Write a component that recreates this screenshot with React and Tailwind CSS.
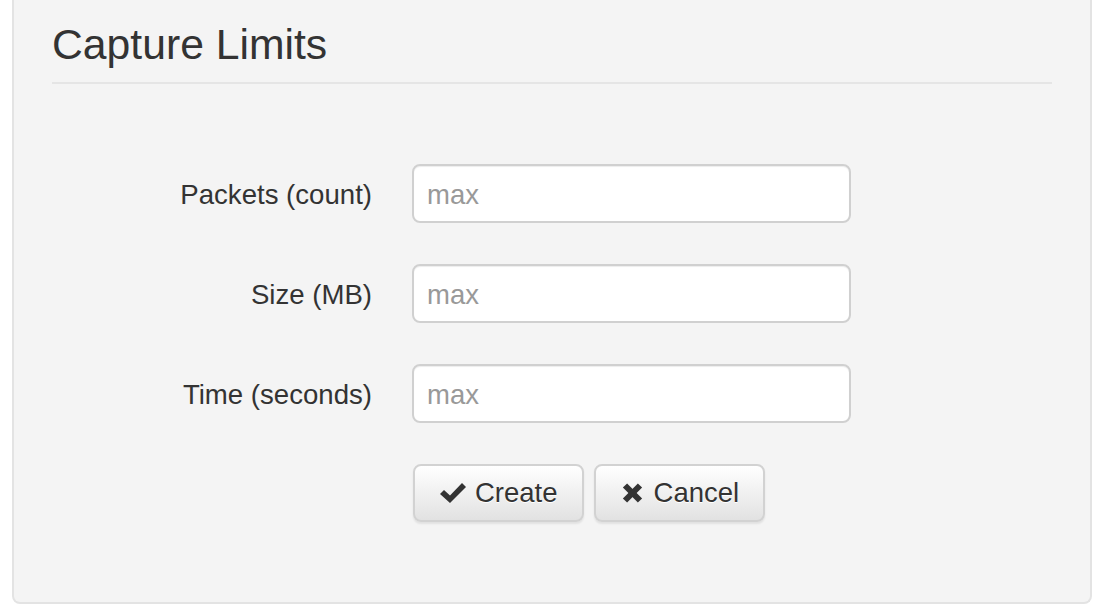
const fields = [
  { label: 'Packets (count)', name: 'packets' },
  { label: 'Size (MB)', name: 'size' },
  { label: 'Time (seconds)', name: 'time' },
];

function OkIcon() {
  return (
    <svg width="26" height="20" viewBox="0 0 26 20" aria-hidden="true">
      <polygon points="0,11 4,7 10,12.5 22,0 26,4 10,20" fill="#333" />
    </svg>
  );
}

function RemoveIcon() {
  return (
    <svg width="24" height="20" viewBox="0 0 24 20" aria-hidden="true">
      <g stroke="#333" strokeWidth="6" strokeLinecap="butt">
        <line x1="4" y1="2.5" x2="19" y2="17.5" />
        <line x1="19" y1="2.5" x2="4" y2="17.5" />
      </g>
    </svg>
  );
}

function Button({ icon, children }) {
  return (
    <button
      type="button"
      className="flex items-center gap-[9px] h-[58px] pl-[25px] pr-[24px] rounded-[8px] border-2 border-[#d2d2d2] bg-linear-to-b from-white to-[#e2e2e2] text-[27.5px] text-[#333] shadow-[0_2px_2px_rgba(0,0,0,0.08)]"
    >
      {icon}
      <span className="[text-shadow:0_1px_0_#fff]">{children}</span>
    </button>
  );
}

export default function App() {
  return (
    <div className="min-h-[614px] bg-white pl-[12px] font-['Liberation_Sans',Arial,sans-serif] text-[#333]">
      <div className="w-[1080px] rounded-b-[8px] border-2 border-t-0 border-[#e3e3e3] bg-[#f4f4f4] px-[38px] pt-[21px] pb-[80px]">
        <h3 className="border-b-2 border-[#e5e5e5] pb-[15px] text-[42.7px] leading-[46px] font-normal">
          Capture Limits
        </h3>

        <form className="mt-[80px] flex flex-col gap-[41px]">
          {fields.map(({ label, name }) => (
            <div key={name} className="flex items-center">
              <label htmlFor={name} className="w-[320px] pt-[3px] text-right text-[27.6px]">
                {label}
              </label>
              <input
                id={name}
                type="text"
                placeholder="max"
                className="ml-[40px] h-[59px] w-[439px] rounded-[8px] border-2 border-[#d0d0d0] bg-white px-[13px] pt-[2px] text-[27.5px] text-[#555] placeholder:text-[#999] shadow-[inset_0_1px_1px_rgba(0,0,0,0.075)] outline-none"
              />
            </div>
          ))}

          <div className="flex">
            <div className="w-[320px]" />
            <div className="ml-[41px] flex gap-[10px]">
              <Button icon={<OkIcon />}>Create</Button>
              <Button icon={<RemoveIcon />}>Cancel</Button>
            </div>
          </div>
        </form>
      </div>
    </div>
  );
}
